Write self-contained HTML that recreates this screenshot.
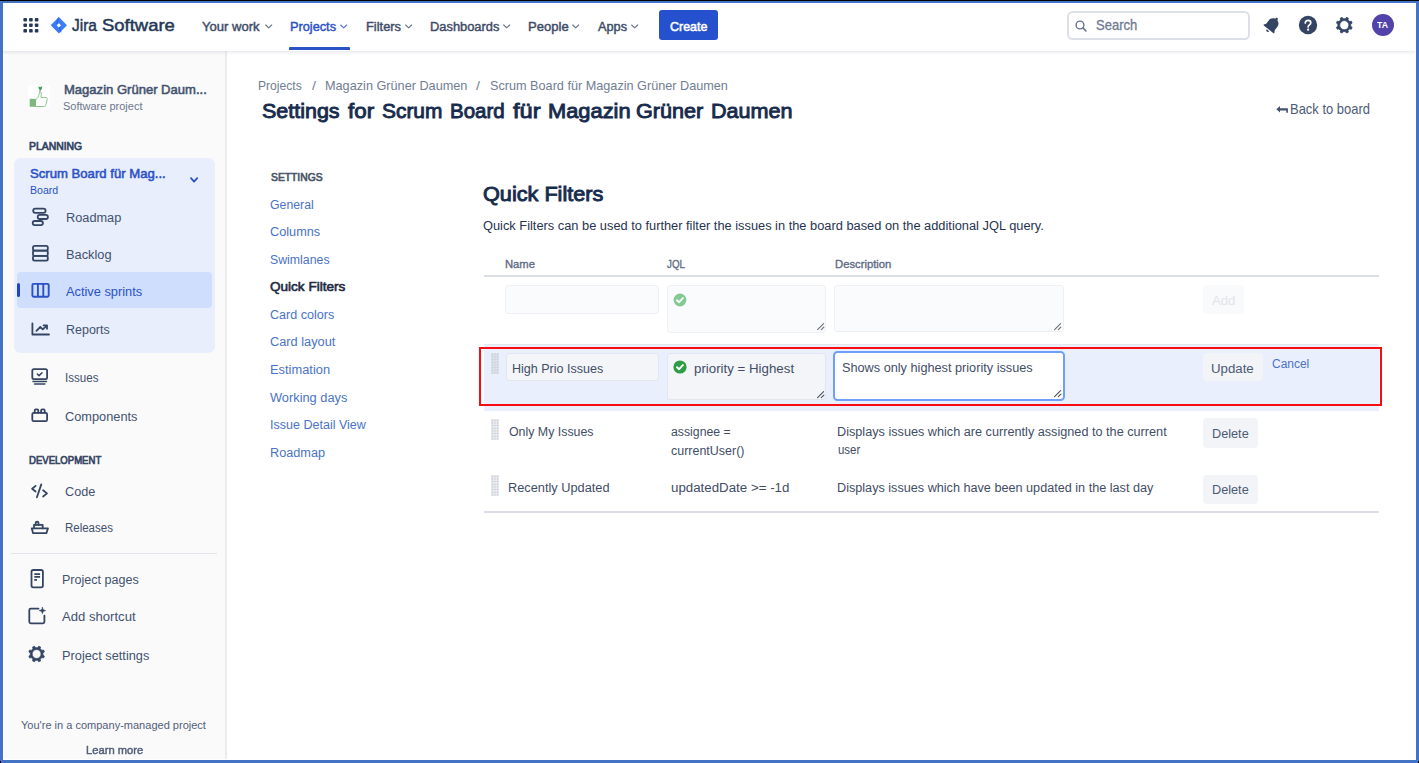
<!DOCTYPE html>
<html><head><meta charset="utf-8"><title>Jira</title>
<style>
html,body{margin:0;padding:0;background:#fff;}
body{width:1419px;height:763px;position:relative;overflow:hidden;font-family:'Liberation Sans', sans-serif;}
svg{position:absolute;overflow:visible}
</style></head><body>
<div style="position:absolute;left:0;top:0;width:1419px;height:763px;filter:blur(0.35px);">
<div style="position:absolute;left:0px;top:0px;width:1419px;height:763px;background:#fff;"></div>
<div style="position:absolute;left:4px;top:51px;width:222px;height:708px;background:#FAFAFB;"></div>
<div style="position:absolute;left:225.2px;top:51px;width:1.7px;height:708px;background:#EBECEF;"></div>
<div style="position:absolute;left:3px;top:3px;width:1413px;height:48px;background:#fff;"></div>
<div style="position:absolute;left:3px;top:50.7px;width:1412px;height:4px;background:linear-gradient(to bottom,rgba(9,30,66,0.085),rgba(9,30,66,0.04) 50%,rgba(9,30,66,0));"></div>
<svg width="1419" height="60" style="left:0;top:0"><rect x="23.4" y="17.9" width="3.6" height="3.5" rx="0.9" fill="#253858"/><rect x="29.1" y="17.9" width="3.6" height="3.5" rx="0.9" fill="#253858"/><rect x="34.8" y="17.9" width="3.6" height="3.5" rx="0.9" fill="#253858"/><rect x="23.4" y="23.5" width="3.6" height="3.5" rx="0.9" fill="#253858"/><rect x="29.1" y="23.5" width="3.6" height="3.5" rx="0.9" fill="#253858"/><rect x="34.8" y="23.5" width="3.6" height="3.5" rx="0.9" fill="#253858"/><rect x="23.4" y="29.1" width="3.6" height="3.5" rx="0.9" fill="#253858"/><rect x="29.1" y="29.1" width="3.6" height="3.5" rx="0.9" fill="#253858"/><rect x="34.8" y="29.1" width="3.6" height="3.5" rx="0.9" fill="#253858"/></svg>
<svg width="1419" height="60" style="left:0;top:0">
<path d="M58.85 17.0 L67.0 25.3 L58.85 33.6 L50.7 25.3 Z M58.85 23.2 L56.75 25.3 L58.85 27.4 L60.95 25.3 Z" fill="#3B7CF8" fill-rule="evenodd"/>
<path d="M58.3 18.2 L57.0 23.4" stroke="#2456BF" stroke-width="1.3" opacity="0.55" stroke-linecap="round"/>
<path d="M59.6 27.5 L60.9 32.0" stroke="#2456BF" stroke-width="1.3" opacity="0.55" stroke-linecap="round"/>
</svg>
<svg width="10" height="8" style="left:264.5px;top:24.1px"><path d="M0.7 1 L3.7 3.9 L6.7 1" fill="none" stroke="#42526E" stroke-width="1.15" stroke-linecap="round" stroke-linejoin="round" opacity="0.8"/></svg>
<svg width="10" height="8" style="left:340px;top:24.1px"><path d="M0.7 1 L3.7 3.9 L6.7 1" fill="none" stroke="#2B51C8" stroke-width="1.15" stroke-linecap="round" stroke-linejoin="round" opacity="0.8"/></svg>
<svg width="10" height="8" style="left:405px;top:24.1px"><path d="M0.7 1 L3.7 3.9 L6.7 1" fill="none" stroke="#42526E" stroke-width="1.15" stroke-linecap="round" stroke-linejoin="round" opacity="0.8"/></svg>
<svg width="10" height="8" style="left:502.8px;top:24.1px"><path d="M0.7 1 L3.7 3.9 L6.7 1" fill="none" stroke="#42526E" stroke-width="1.15" stroke-linecap="round" stroke-linejoin="round" opacity="0.8"/></svg>
<svg width="10" height="8" style="left:571.8px;top:24.1px"><path d="M0.7 1 L3.7 3.9 L6.7 1" fill="none" stroke="#42526E" stroke-width="1.15" stroke-linecap="round" stroke-linejoin="round" opacity="0.8"/></svg>
<svg width="10" height="8" style="left:631.3px;top:24.1px"><path d="M0.7 1 L3.7 3.9 L6.7 1" fill="none" stroke="#42526E" stroke-width="1.15" stroke-linecap="round" stroke-linejoin="round" opacity="0.8"/></svg>
<div style="position:absolute;left:288.8px;top:47.3px;width:61px;height:3px;background:#2B51C8;border-radius:1px 1px 0 0;"></div>
<div style="position:absolute;left:658.7px;top:10.4px;width:59.6px;height:29.7px;background:#2651CE;border-radius:3px;"></div>
<div style="position:absolute;left:1067.1px;top:10.6px;width:183.2px;height:29.3px;box-sizing:border-box;border:2px solid #DEE0E9;border-radius:5.5px;background:#fff;"></div>
<svg width="14" height="14" style="left:1075px;top:19.5px"><circle cx="5" cy="5" r="3.9" fill="none" stroke="#66718B" stroke-width="1.4"/><path d="M7.9 7.9 L11 11" stroke="#66718B" stroke-width="1.5" stroke-linecap="round"/></svg>
<svg width="24" height="24" viewBox="0 0 24 24" style="left:1260.4px;top:13.2px"><g transform="rotate(38 12 12)" fill="#344563">
<path d="M12 3.2c-.7 0-1.2.5-1.2 1.2v.5C8.3 5.5 6.6 7.700 6.600 10.400v4.1l-1.300 2.1c-.2.400.050.900.500.900h12.400c.450 0 .7-.5.500-.9l-1.300-2.100v-4.100c0-2.700-1.700-4.900-4.200-5.500v-.5c0-.7-.5-1.200-1.200-1.200z"/>
<path d="M10.300 18.600h3.400c0 1-.8 1.700-1.700 1.700s-1.700-.7-1.700-1.700z"/></g></svg>
<svg width="20" height="20" style="left:1298px;top:15.2px"><circle cx="10" cy="10" r="9.2" fill="#344563"/>
<path d="M7.3 7.900c0-1.500 1.200-2.600 2.750-2.600s2.750 1 2.750 2.450c0 1.200-.75 1.750-1.500 2.300-.700.500-1.150.9-1.150 1.850" fill="none" stroke="#fff" stroke-width="1.700" stroke-linecap="round"/><circle cx="10.100" cy="14.700" r="1.100" fill="#fff"/></svg>
<svg width="1419" height="60" style="left:0;top:0"><path d="M1350.69 26.41 L1352.13 27.29 L1351.31 29.26 L1349.67 28.86 L1347.96 30.57 L1348.36 32.21 L1346.39 33.03 L1345.51 31.59 L1343.09 31.59 L1342.21 33.03 L1340.24 32.21 L1340.64 30.57 L1338.93 28.86 L1337.29 29.26 L1336.47 27.29 L1337.91 26.41 L1337.91 23.99 L1336.47 23.11 L1337.29 21.14 L1338.93 21.54 L1340.64 19.83 L1340.24 18.19 L1342.21 17.37 L1343.09 18.81 L1345.51 18.81 L1346.39 17.37 L1348.36 18.19 L1347.96 19.83 L1349.67 21.54 L1351.31 21.14 L1352.13 23.11 L1350.69 23.99 Z M1348.90 25.20 A4.6 4.6 0 1 0 1339.70 25.20 A4.6 4.6 0 1 0 1348.90 25.20 Z" fill="#344563" fill-rule="evenodd" stroke="#344563" stroke-width="0.8" stroke-linejoin="round"/></svg>
<div style="position:absolute;left:1371.9px;top:14.1px;width:22.2px;height:22.2px;background:#5243AA;border-radius:50%;"></div>
<div style="position:absolute;left:27.9px;top:84.6px;width:21.7px;height:23.4px;background:#fff;border-radius:3px;"></div>
<svg width="22" height="24" viewBox="0 0 22 24" style="left:28px;top:84.6px">
<path d="M10.3 1.2 L12.2 2.3 L14.3 1.1 L13.7 4.2 L12.3 5.4 L11.0 4.3 Z" fill="#3FA04E"/>
<path d="M12.2 5.2 L11.7 7.2" stroke="#8C6C90" stroke-width="0.9"/>
<rect x="1.7" y="13.8" width="6.3" height="8.0" fill="#7DB97C"/>
<path d="M8.1 14.3 C9.4 13.6 10.3 12.3 10.7 10.6 L11.4 7.6 C11.6 6.7 13.2 6.8 13.3 7.9 L13.0 12.6 L18.3 12.6 C19.4 12.6 19.6 13.6 19.2 14.6 L17.6 20.6 C17.4 21.3 17.0 21.5 16.3 21.5 L8.1 21.5" fill="#fff" stroke="#8CC48B" stroke-width="1.0" stroke-linejoin="round"/>
</svg>
<div style="position:absolute;left:13.6px;top:157.5px;width:201.5px;height:195.1px;background:#E8EEFC;border-radius:7px;"></div>
<svg width="10" height="8" style="left:189.6px;top:176.6px"><path d="M1 1.200 L4.100 4.600 L7.200 1.200" fill="none" stroke="#2B51C8" stroke-width="1.800" stroke-linecap="round" stroke-linejoin="round"/></svg>
<div style="position:absolute;left:16.8px;top:271.7px;width:195.5px;height:36.8px;background:#CEDEFC;border-radius:4px;"></div>
<div style="position:absolute;left:17.2px;top:283.3px;width:3.1px;height:14.1px;background:#1F45C6;border-radius:1.5px;"></div>
<svg width="240" height="763" style="left:0;top:0" fill="none" stroke="#344563" stroke-width="1.800" stroke-linecap="round" stroke-linejoin="round"><rect x="33.200" y="208.600" width="12.400" height="4.200" rx="2.100"/>
<rect x="37.700" y="214.800" width="10.200" height="4.200" rx="2.100"/>
<rect x="32.700" y="221.000" width="10.200" height="4.200" rx="2.100"/></svg>
<svg width="240" height="763" style="left:0;top:0" fill="none" stroke="#344563" stroke-width="1.800" stroke-linecap="round" stroke-linejoin="round"><rect x="33.000" y="245.800" width="14.800" height="4.800" rx="1.600"/>
<rect x="33.000" y="250.600" width="14.800" height="5.200" rx="1.200"/>
<rect x="33.000" y="255.800" width="14.800" height="4.900" rx="1.600"/></svg>
<svg width="240" height="763" style="left:0;top:0" fill="none" stroke="#2B51C8" stroke-width="1.900" stroke-linejoin="round">
<rect x="32.400" y="283.900" width="16.300" height="12.800" rx="1.200"/><path d="M37.900 283.900 V296.700 M43.300 283.900 V296.700"/></svg>
<svg width="240" height="763" style="left:0;top:0" fill="none" stroke="#344563" stroke-width="1.800" stroke-linecap="round" stroke-linejoin="round"><path d="M32.400 323.300 V334.500 H49.000"/><path d="M36.400 330.800 L40.300 327.000 L42.800 329.300 L46.500 325.900"/><path d="M43.600 325.400 H47.000 V328.800"/></svg>
<svg width="240" height="763" style="left:0;top:0" fill="none" stroke="#344563" stroke-width="1.800" stroke-linecap="round" stroke-linejoin="round"><rect x="32.300" y="369.200" width="14.800" height="10.000" rx="1.600"/><path d="M37.400 374.100 L39.100 375.600 L42.000 372.800" stroke-width="1.500"/>
<path d="M33.000 381.500 H46.400 M34.600 384.000 H44.800" stroke-width="1.600"/></svg>
<svg width="240" height="763" style="left:0;top:0" fill="none" stroke="#344563" stroke-width="1.800" stroke-linecap="round" stroke-linejoin="round"><rect x="32.300" y="412.800" width="14.800" height="8.400" rx="1.400"/><path d="M34.700 412.800 V410.400 Q34.700 409.300 35.800 409.300 H37.200 Q38.300 409.300 38.300 410.400 V412.800 M41.100 412.800 V410.400 Q41.100 409.300 42.200 409.300 H43.600 Q44.700 409.300 44.700 410.400 V412.800"/></svg>
<svg width="240" height="763" style="left:0;top:0" fill="none" stroke="#344563" stroke-width="1.800" stroke-linecap="round" stroke-linejoin="round"><path d="M35.6 485.9 L32.1 488.7 L35.6 491.5"/><path d="M43.1 490.3 L47.0 493.4 L43.1 496.5"/><path d="M41.3 484.4 L36.9 497.3"/></svg>
<svg width="240" height="763" style="left:0;top:0" fill="none" stroke="#344563" stroke-width="1.800" stroke-linecap="round" stroke-linejoin="round"><path d="M31.7 528.3 H48.0 L46.4 533.2 H33.1 Z"/><path d="M34.0 528.3 V524.9 H42.7 V528.3"/><path d="M35.7 524.9 V523.0 Q35.7 521.7 37.1 521.7 Q38.5 521.7 38.5 523.0 V524.9"/></svg>
<div style="position:absolute;left:10.8px;top:552.9px;width:206.1px;height:1.6px;background:#E1E4E9;"></div>
<svg width="240" height="763" style="left:0;top:0" fill="none" stroke="#344563" stroke-width="1.800" stroke-linecap="round" stroke-linejoin="round"><rect x="31.500" y="570.000" width="11.400" height="17.300" rx="1.800"/><path d="M34.300 574.100 H40.100 M34.300 576.900 H40.100 M34.300 579.800 H37.000" stroke-width="1.700" stroke-linecap="butt"/></svg>
<svg width="240" height="763" style="left:0;top:0" fill="none" stroke="#344563" stroke-width="1.800" stroke-linecap="round" stroke-linejoin="round"><path d="M38.500 608.700 H30.800 Q29.300 608.700 29.300 610.200 V621.800 Q29.300 623.300 30.800 623.300 H42.900 Q44.400 623.300 44.400 621.800 V615.600"/>
<path d="M42.4 607.4 L43.2 609.8 L45.6 610.600 L43.2 611.4 L42.4 613.8 L41.6 611.4 L39.2 610.6 L41.6 609.8 Z" fill="#344563" stroke-width="0.6"/></svg>
<svg width="240" height="763" style="left:0;top:0"><path d="M42.89 655.19 L44.33 656.06 L43.52 658.01 L41.89 657.61 L40.21 659.29 L40.61 660.92 L38.66 661.73 L37.79 660.29 L35.41 660.29 L34.54 661.73 L32.59 660.92 L32.99 659.29 L31.31 657.61 L29.68 658.01 L28.87 656.06 L30.31 655.19 L30.31 652.81 L28.87 651.94 L29.68 649.99 L31.31 650.39 L32.99 648.71 L32.59 647.08 L34.54 646.27 L35.41 647.71 L37.79 647.71 L38.66 646.27 L40.61 647.08 L40.21 648.71 L41.89 650.39 L43.52 649.99 L44.33 651.94 L42.89 652.81 Z M41.10 654.00 A4.5 4.5 0 1 0 32.10 654.00 A4.5 4.5 0 1 0 41.10 654.00 Z" fill="#344563" fill-rule="evenodd" stroke="#344563" stroke-width="0.8" stroke-linejoin="round"/></svg>
<svg width="14" height="10" style="left:1275.8px;top:105px"><path d="M0.300 4.300 L4.000 1.000 V3.200 H11.900 V7.800 H10.300 V5.400 H4.000 V7.600 Z" fill="#42526E"/></svg>
<div style="position:absolute;left:484.3px;top:275.2px;width:894.8px;height:2px;background:#DBDEE6;"></div>
<div style="position:absolute;left:505.4px;top:285px;width:154px;height:28.9px;background:#FAFBFC;border:1px solid #EEF0F3;border-radius:3px;box-sizing:border-box;"></div>
<div style="position:absolute;left:667px;top:285px;width:159.3px;height:47.8px;background:#FAFBFC;border:1px solid #EEF0F3;border-radius:3px;box-sizing:border-box;"></div>
<div style="position:absolute;left:833.5px;top:285px;width:230.7px;height:47.4px;background:#FAFBFC;border:1px solid #EEF0F3;border-radius:3px;box-sizing:border-box;"></div>
<svg width="16" height="16" style="left:672px;top:291.5px"><circle cx="8" cy="8" r="6.4" fill="#84C994"/><path d="M5.0 8.2 L7.1 10.2 L10.9 6.1" fill="none" stroke="#fff" stroke-width="1.9" stroke-linecap="round" stroke-linejoin="round"/></svg>
<svg width="9" height="8" style="left:816.7px;top:323px"><path d="M0.6 6.6 L6.6 0.6 M4.3 6.7 L6.9 4.1" stroke="#6A6F78" stroke-width="1.1" stroke-linecap="round"/></svg>
<svg width="9" height="8" style="left:1053.8px;top:322.6px"><path d="M0.6 6.6 L6.6 0.6 M4.3 6.7 L6.9 4.1" stroke="#6A6F78" stroke-width="1.1" stroke-linecap="round"/></svg>
<div style="position:absolute;left:1203.2px;top:284.7px;width:40.7px;height:28.9px;background:#F9FAFB;border-radius:3px;"></div>
<div style="position:absolute;left:484.3px;top:343.5px;width:894.8px;height:1.1px;background:#E3E6EB;"></div>
<div style="position:absolute;left:483.6px;top:344.6px;width:895.5px;height:66.6px;background:#E9EFFC;"></div>
<div style="position:absolute;left:479.1px;top:346.8px;width:902.8px;height:59px;box-sizing:border-box;border:2px solid #F80C12;"></div>
<div style="position:absolute;left:490.6px;top:352.8px;width:8px;height:21.3px;background:radial-gradient(circle at 50% 50%,#CBCFD8 0.75px,rgba(195,200,210,0.3) 1.2px,transparent 1.5px) 0 0/2.667px 2.667px;"></div>
<div style="position:absolute;left:505.7px;top:352.9px;width:153.5px;height:28.6px;background:#F3F5F9;border:1px solid #E3E6EC;border-radius:3px;box-sizing:border-box;"></div>
<div style="position:absolute;left:667.3px;top:352.9px;width:158.7px;height:46.9px;background:#F3F5F9;border:1px solid #E3E6EC;border-radius:3px;box-sizing:border-box;"></div>
<svg width="16" height="16" style="left:671.9px;top:359.4px"><circle cx="8" cy="8" r="6.6" fill="#2F9C48"/><path d="M5.0 8.2 L7.1 10.2 L10.9 6.1" fill="none" stroke="#fff" stroke-width="1.9" stroke-linecap="round" stroke-linejoin="round"/></svg>
<svg width="9" height="8" style="left:816.5px;top:390.6px"><path d="M0.6 6.6 L6.6 0.6 M4.3 6.7 L6.9 4.1" stroke="#4A4F58" stroke-width="1.1" stroke-linecap="round"/></svg>
<div style="position:absolute;left:832.8px;top:351.2px;width:232.2px;height:49.5px;background:#fff;border:2px solid #6F9FFA;border-radius:4.5px;box-sizing:border-box;"></div>
<svg width="9" height="8" style="left:1053.8px;top:389.6px"><path d="M0.6 6.6 L6.6 0.6 M4.3 6.7 L6.9 4.1" stroke="#4A4F58" stroke-width="1.1" stroke-linecap="round"/></svg>
<div style="position:absolute;left:1203.2px;top:352.9px;width:59.8px;height:28.5px;background:#F2F4F7;border-radius:4px;"></div>
<div style="position:absolute;left:490.7px;top:418.7px;width:8px;height:21.3px;background:radial-gradient(circle at 50% 50%,#CBCFD8 0.75px,rgba(195,200,210,0.3) 1.2px,transparent 1.5px) 0 0/2.667px 2.667px;"></div>
<div style="position:absolute;left:1202.7px;top:418.4px;width:55.1px;height:29.5px;background:#F3F4F7;border-radius:4px;"></div>
<div style="position:absolute;left:490.7px;top:474.6px;width:8px;height:21.3px;background:radial-gradient(circle at 50% 50%,#CBCFD8 0.75px,rgba(195,200,210,0.3) 1.2px,transparent 1.5px) 0 0/2.667px 2.667px;"></div>
<div style="position:absolute;left:1202.7px;top:474.5px;width:55.1px;height:29.5px;background:#F3F4F7;border-radius:4px;"></div>
<div style="position:absolute;left:484.3px;top:511.1px;width:894.8px;height:2px;background:#DBDEE6;"></div>
<div style="position:absolute;left:72.20px;top:11px;white-space:pre;line-height:30px;font-size:17px;font-weight:400;color:#253858;transform:scaleX(0.9092);transform-origin:0 0;-webkit-text-stroke:0.5px #253858;">Jira</div>
<div style="position:absolute;left:102.20px;top:11px;white-space:pre;line-height:30px;font-size:17px;font-weight:400;color:#253858;transform:scaleX(1.0851);transform-origin:0 0;-webkit-text-stroke:0.5px #253858;">Software</div>
<div style="position:absolute;left:202.00px;top:12px;white-space:pre;line-height:30px;font-size:13.25px;font-weight:400;color:#3E4C67;transform:scaleX(0.9863);transform-origin:0 0;-webkit-text-stroke:0.45px #3E4C67;">Your work</div>
<div style="position:absolute;left:289.64px;top:12px;white-space:pre;line-height:30px;font-size:13.25px;font-weight:400;color:#2B51C8;transform:scaleX(0.9611);transform-origin:0 0;-webkit-text-stroke:0.45px #2B51C8;">Projects</div>
<div style="position:absolute;left:365.53px;top:12px;white-space:pre;line-height:30px;font-size:13.25px;font-weight:400;color:#3E4C67;transform:scaleX(0.9706);transform-origin:0 0;-webkit-text-stroke:0.45px #3E4C67;">Filters</div>
<div style="position:absolute;left:429.53px;top:12px;white-space:pre;line-height:30px;font-size:13.25px;font-weight:400;color:#3E4C67;transform:scaleX(0.9715);transform-origin:0 0;-webkit-text-stroke:0.45px #3E4C67;">Dashboards</div>
<div style="position:absolute;left:528.21px;top:12px;white-space:pre;line-height:30px;font-size:13.25px;font-weight:400;color:#3E4C67;transform:scaleX(0.9852);transform-origin:0 0;-webkit-text-stroke:0.45px #3E4C67;">People</div>
<div style="position:absolute;left:598.20px;top:12px;white-space:pre;line-height:30px;font-size:13.25px;font-weight:400;color:#3E4C67;transform:scaleX(0.9615);transform-origin:0 0;-webkit-text-stroke:0.45px #3E4C67;">Apps</div>
<div style="position:absolute;left:670.20px;top:12px;white-space:pre;line-height:30px;font-size:13.25px;font-weight:400;color:#fff;transform:scaleX(0.9416);transform-origin:0 0;-webkit-text-stroke:0.55px #fff;">Create</div>
<div style="position:absolute;left:1096.00px;top:11px;white-space:pre;line-height:30px;font-size:13.75px;font-weight:400;color:#6F7A92;transform:scaleX(0.9483);transform-origin:0 0;-webkit-text-stroke:0.3px #6F7A92;">Search</div>
<div style="position:absolute;left:1377.20px;top:10px;white-space:pre;line-height:30px;font-size:8.75px;font-weight:700;color:#fff;transform:scaleX(1.0004);transform-origin:0 0;">TA</div>
<div style="position:absolute;left:63.52px;top:75px;white-space:pre;line-height:30px;font-size:13.25px;font-weight:400;color:#42526E;transform:scaleX(0.9840);transform-origin:0 0;-webkit-text-stroke:0.55px #42526E;">Magazin Grüner Daum...</div>
<div style="position:absolute;left:63.40px;top:91px;white-space:pre;line-height:30px;font-size:11.25px;font-weight:400;color:#6B778C;transform:scaleX(0.9773);transform-origin:0 0;">Software project</div>
<div style="position:absolute;left:29.00px;top:131px;white-space:pre;line-height:30px;font-size:10.75px;font-weight:400;color:#344563;transform:scaleX(0.9671);transform-origin:0 0;-webkit-text-stroke:0.7px #344563;">PLANNING</div>
<div style="position:absolute;left:30.00px;top:159px;white-space:pre;line-height:30px;font-size:13.25px;font-weight:400;color:#2B51C8;transform:scaleX(0.9906);transform-origin:0 0;-webkit-text-stroke:0.55px #2B51C8;">Scrum Board für Mag...</div>
<div style="position:absolute;left:30.00px;top:175px;white-space:pre;line-height:30px;font-size:11.25px;font-weight:400;color:#2B51C8;transform:scaleX(0.9408);transform-origin:0 0;">Board</div>
<div style="position:absolute;left:65.65px;top:203px;white-space:pre;line-height:30px;font-size:13.25px;font-weight:400;color:#42526E;transform:scaleX(0.9626);transform-origin:0 0;">Roadmap</div>
<div style="position:absolute;left:65.65px;top:240px;white-space:pre;line-height:30px;font-size:13.25px;font-weight:400;color:#42526E;transform:scaleX(0.9654);transform-origin:0 0;">Backlog</div>
<div style="position:absolute;left:65.65px;top:277px;white-space:pre;line-height:30px;font-size:13.25px;font-weight:400;color:#2B51C8;transform:scaleX(0.9670);transform-origin:0 0;">Active sprints</div>
<div style="position:absolute;left:65.65px;top:315px;white-space:pre;line-height:30px;font-size:13.25px;font-weight:400;color:#42526E;transform:scaleX(0.9419);transform-origin:0 0;">Reports</div>
<div style="position:absolute;left:65.20px;top:363px;white-space:pre;line-height:30px;font-size:13.25px;font-weight:400;color:#42526E;transform:scaleX(0.8741);transform-origin:0 0;">Issues</div>
<div style="position:absolute;left:65.20px;top:402px;white-space:pre;line-height:30px;font-size:13.25px;font-weight:400;color:#42526E;transform:scaleX(0.9642);transform-origin:0 0;">Components</div>
<div style="position:absolute;left:28.80px;top:445px;white-space:pre;line-height:30px;font-size:10.75px;font-weight:400;color:#344563;transform:scaleX(0.8889);transform-origin:0 0;-webkit-text-stroke:0.7px #344563;">DEVELOPMENT</div>
<div style="position:absolute;left:65.20px;top:477px;white-space:pre;line-height:30px;font-size:13.25px;font-weight:400;color:#42526E;transform:scaleX(0.9551);transform-origin:0 0;">Code</div>
<div style="position:absolute;left:65.20px;top:513px;white-space:pre;line-height:30px;font-size:13.25px;font-weight:400;color:#42526E;transform:scaleX(0.8667);transform-origin:0 0;">Releases</div>
<div style="position:absolute;left:62.30px;top:565px;white-space:pre;line-height:30px;font-size:13.25px;font-weight:400;color:#42526E;transform:scaleX(0.9472);transform-origin:0 0;">Project pages</div>
<div style="position:absolute;left:62.30px;top:602px;white-space:pre;line-height:30px;font-size:13.25px;font-weight:400;color:#42526E;transform:scaleX(0.9892);transform-origin:0 0;">Add shortcut</div>
<div style="position:absolute;left:62.30px;top:641px;white-space:pre;line-height:30px;font-size:13.25px;font-weight:400;color:#42526E;transform:scaleX(0.9642);transform-origin:0 0;">Project settings</div>
<div style="position:absolute;left:21.00px;top:710px;white-space:pre;line-height:30px;font-size:11.5px;font-weight:400;color:#525E79;transform:scaleX(0.9586);transform-origin:0 0;">You&#x27;re in a company-managed project</div>
<div style="position:absolute;left:85.60px;top:735px;white-space:pre;line-height:30px;font-size:11.5px;font-weight:400;color:#525E79;transform:scaleX(0.9724);transform-origin:0 0;-webkit-text-stroke:0.45px #525E79;">Learn more</div>
<div style="position:absolute;left:257.57px;top:71px;white-space:pre;line-height:30px;font-size:13px;font-weight:400;color:#717D93;transform:scaleX(0.9320);transform-origin:0 0;">Projects</div>
<div style="position:absolute;left:311.60px;top:71px;white-space:pre;line-height:30px;font-size:13px;font-weight:400;color:#717D93;transform:scaleX(1.1000);transform-origin:0 0;">/</div>
<div style="position:absolute;left:324.52px;top:71px;white-space:pre;line-height:30px;font-size:13px;font-weight:400;color:#717D93;transform:scaleX(0.9756);transform-origin:0 0;">Magazin Grüner Daumen</div>
<div style="position:absolute;left:476.40px;top:71px;white-space:pre;line-height:30px;font-size:13px;font-weight:400;color:#717D93;transform:scaleX(1.1000);transform-origin:0 0;">/</div>
<div style="position:absolute;left:490.00px;top:71px;white-space:pre;line-height:30px;font-size:13px;font-weight:400;color:#717D93;transform:scaleX(0.9742);transform-origin:0 0;">Scrum Board für Magazin Grüner Daumen</div>
<div style="position:absolute;left:262.30px;top:96px;white-space:pre;line-height:30px;font-size:21px;font-weight:400;color:#172B4D;transform:scaleX(1.0228);transform-origin:0 0;-webkit-text-stroke:0.9px #172B4D;">Settings</div>
<div style="position:absolute;left:347.60px;top:96px;white-space:pre;line-height:30px;font-size:21px;font-weight:400;color:#172B4D;transform:scaleX(1.0647);transform-origin:0 0;-webkit-text-stroke:0.9px #172B4D;">for</div>
<div style="position:absolute;left:382.10px;top:96px;white-space:pre;line-height:30px;font-size:21px;font-weight:400;color:#172B4D;transform:scaleX(0.9954);transform-origin:0 0;-webkit-text-stroke:0.9px #172B4D;">Scrum</div>
<div style="position:absolute;left:450.02px;top:96px;white-space:pre;line-height:30px;font-size:21px;font-weight:400;color:#172B4D;transform:scaleX(0.9768);transform-origin:0 0;-webkit-text-stroke:0.9px #172B4D;">Board</div>
<div style="position:absolute;left:513.30px;top:96px;white-space:pre;line-height:30px;font-size:21px;font-weight:400;color:#172B4D;transform:scaleX(1.1218);transform-origin:0 0;-webkit-text-stroke:0.9px #172B4D;">für</div>
<div style="position:absolute;left:548.16px;top:96px;white-space:pre;line-height:30px;font-size:21px;font-weight:400;color:#172B4D;transform:scaleX(1.0399);transform-origin:0 0;-webkit-text-stroke:0.9px #172B4D;">Magazin</div>
<div style="position:absolute;left:635.87px;top:96px;white-space:pre;line-height:30px;font-size:21px;font-weight:400;color:#172B4D;transform:scaleX(1.0301);transform-origin:0 0;-webkit-text-stroke:0.9px #172B4D;">Grüner</div>
<div style="position:absolute;left:711.27px;top:96px;white-space:pre;line-height:30px;font-size:21px;font-weight:400;color:#172B4D;transform:scaleX(1.0284);transform-origin:0 0;-webkit-text-stroke:0.9px #172B4D;">Daumen</div>
<div style="position:absolute;left:1290.26px;top:95px;white-space:pre;line-height:30px;font-size:13.75px;font-weight:400;color:#4E5B76;transform:scaleX(0.9436);transform-origin:0 0;">Back to board</div>
<div style="position:absolute;left:270.90px;top:162px;white-space:pre;line-height:30px;font-size:10.75px;font-weight:400;color:#4A5468;transform:scaleX(0.9592);transform-origin:0 0;-webkit-text-stroke:0.65px #4A5468;">SETTINGS</div>
<div style="position:absolute;left:270.30px;top:190px;white-space:pre;line-height:30px;font-size:13.25px;font-weight:400;color:#4A73C5;transform:scaleX(0.9281);transform-origin:0 0;">General</div>
<div style="position:absolute;left:270.30px;top:217px;white-space:pre;line-height:30px;font-size:13.25px;font-weight:400;color:#4A73C5;transform:scaleX(0.9590);transform-origin:0 0;">Columns</div>
<div style="position:absolute;left:270.30px;top:245px;white-space:pre;line-height:30px;font-size:13.25px;font-weight:400;color:#4A73C5;transform:scaleX(0.9296);transform-origin:0 0;">Swimlanes</div>
<div style="position:absolute;left:270.30px;top:272px;white-space:pre;line-height:30px;font-size:13.25px;font-weight:400;color:#20293F;transform:scaleX(1.0231);transform-origin:0 0;-webkit-text-stroke:0.6px #20293F;">Quick Filters</div>
<div style="position:absolute;left:270.30px;top:300px;white-space:pre;line-height:30px;font-size:13.25px;font-weight:400;color:#4A73C5;transform:scaleX(0.9483);transform-origin:0 0;">Card colors</div>
<div style="position:absolute;left:270.30px;top:327px;white-space:pre;line-height:30px;font-size:13.25px;font-weight:400;color:#4A73C5;transform:scaleX(0.9651);transform-origin:0 0;">Card layout</div>
<div style="position:absolute;left:270.30px;top:355px;white-space:pre;line-height:30px;font-size:13.25px;font-weight:400;color:#4A73C5;transform:scaleX(0.9709);transform-origin:0 0;">Estimation</div>
<div style="position:absolute;left:270.30px;top:383px;white-space:pre;line-height:30px;font-size:13.25px;font-weight:400;color:#4A73C5;transform:scaleX(0.9664);transform-origin:0 0;">Working days</div>
<div style="position:absolute;left:270.30px;top:410px;white-space:pre;line-height:30px;font-size:13.25px;font-weight:400;color:#4A73C5;transform:scaleX(0.9458);transform-origin:0 0;">Issue Detail View</div>
<div style="position:absolute;left:270.30px;top:438px;white-space:pre;line-height:30px;font-size:13.25px;font-weight:400;color:#4A73C5;transform:scaleX(0.9583);transform-origin:0 0;">Roadmap</div>
<div style="position:absolute;left:482.90px;top:179px;white-space:pre;line-height:30px;font-size:20.5px;font-weight:400;color:#172B4D;transform:scaleX(1.0567);transform-origin:0 0;-webkit-text-stroke:0.9px #172B4D;">Quick Filters</div>
<div style="position:absolute;left:482.70px;top:211px;white-space:pre;line-height:30px;font-size:13.25px;font-weight:400;color:#26344F;transform:scaleX(0.9675);transform-origin:0 0;">Quick Filters can be used to further filter the issues in the board based on the additional JQL query.</div>
<div style="position:absolute;left:505.40px;top:249px;white-space:pre;line-height:30px;font-size:11.25px;font-weight:400;color:#5E6C84;transform:scaleX(0.9982);transform-origin:0 0;-webkit-text-stroke:0.35px #5E6C84;">Name</div>
<div style="position:absolute;left:667.00px;top:249px;white-space:pre;line-height:30px;font-size:11.25px;font-weight:400;color:#5E6C84;transform:scaleX(0.8687);transform-origin:0 0;-webkit-text-stroke:0.35px #5E6C84;">JQL</div>
<div style="position:absolute;left:834.80px;top:249px;white-space:pre;line-height:30px;font-size:11.25px;font-weight:400;color:#5E6C84;transform:scaleX(1.0015);transform-origin:0 0;-webkit-text-stroke:0.35px #5E6C84;">Description</div>
<div style="position:absolute;left:1212.00px;top:286px;white-space:pre;line-height:30px;font-size:13.25px;font-weight:400;color:#E1E4E9;transform:scaleX(0.9911);transform-origin:0 0;">Add</div>
<div style="position:absolute;left:511.85px;top:354px;white-space:pre;line-height:30px;font-size:13.25px;font-weight:400;color:#414D66;transform:scaleX(0.9453);transform-origin:0 0;">High Prio Issues</div>
<div style="position:absolute;left:693.70px;top:354px;white-space:pre;line-height:30px;font-size:13.25px;font-weight:400;color:#414D66;transform:scaleX(1.0030);transform-origin:0 0;">priority = Highest</div>
<div style="position:absolute;left:841.70px;top:353px;white-space:pre;line-height:30px;font-size:13.25px;font-weight:400;color:#414D66;transform:scaleX(0.9588);transform-origin:0 0;">Shows only highest priority issues</div>
<div style="position:absolute;left:1211.00px;top:354px;white-space:pre;line-height:30px;font-size:13.25px;font-weight:400;color:#4C5975;transform:scaleX(0.9986);transform-origin:0 0;">Update</div>
<div style="position:absolute;left:1272.00px;top:349px;white-space:pre;line-height:30px;font-size:13.25px;font-weight:400;color:#4A73C5;transform:scaleX(0.9031);transform-origin:0 0;">Cancel</div>
<div style="position:absolute;left:509.00px;top:417px;white-space:pre;line-height:30px;font-size:13.25px;font-weight:400;color:#414D66;transform:scaleX(0.9336);transform-origin:0 0;">Only My Issues</div>
<div style="position:absolute;left:671.30px;top:417px;white-space:pre;line-height:30px;font-size:13.25px;font-weight:400;color:#414D66;transform:scaleX(0.9255);transform-origin:0 0;">assignee =</div>
<div style="position:absolute;left:671.30px;top:436px;white-space:pre;line-height:30px;font-size:13.25px;font-weight:400;color:#414D66;transform:scaleX(0.9417);transform-origin:0 0;">currentUser()</div>
<div style="position:absolute;left:837.34px;top:417px;white-space:pre;line-height:30px;font-size:13.25px;font-weight:400;color:#414D66;transform:scaleX(0.9565);transform-origin:0 0;">Displays issues which are currently assigned to the current</div>
<div style="position:absolute;left:838.30px;top:435px;white-space:pre;line-height:30px;font-size:13.25px;font-weight:400;color:#414D66;transform:scaleX(0.8611);transform-origin:0 0;">user</div>
<div style="position:absolute;left:1212.24px;top:419px;white-space:pre;line-height:30px;font-size:13.25px;font-weight:400;color:#4C5975;transform:scaleX(0.9585);transform-origin:0 0;">Delete</div>
<div style="position:absolute;left:508.04px;top:473px;white-space:pre;line-height:30px;font-size:13.25px;font-weight:400;color:#414D66;transform:scaleX(0.9638);transform-origin:0 0;">Recently Updated</div>
<div style="position:absolute;left:671.30px;top:473px;white-space:pre;line-height:30px;font-size:13.25px;font-weight:400;color:#414D66;transform:scaleX(1.0042);transform-origin:0 0;">updatedDate &gt;= -1d</div>
<div style="position:absolute;left:837.35px;top:473px;white-space:pre;line-height:30px;font-size:13.25px;font-weight:400;color:#414D66;transform:scaleX(0.9543);transform-origin:0 0;">Displays issues which have been updated in the last day</div>
<div style="position:absolute;left:1212.24px;top:475px;white-space:pre;line-height:30px;font-size:13.25px;font-weight:400;color:#4C5975;transform:scaleX(0.9585);transform-origin:0 0;">Delete</div>
</div>
<div style="position:absolute;left:0;top:0;width:1419px;height:3px;background:#4472C4"></div>
<div style="position:absolute;left:0;top:0;width:3px;height:763px;background:#4472C4"></div>
<div style="position:absolute;left:1416px;top:0;width:3px;height:763px;background:#4472C4"></div>
<div style="position:absolute;left:0;top:760px;width:1419px;height:3px;background:#4472C4"></div>
<div style="position:absolute;left:0;top:0;width:1419px;height:1px;background:#000"></div>
<div style="position:absolute;left:0;top:761px;width:1px;height:2px;background:#000"></div>
<div style="position:absolute;left:1418px;top:761px;width:1px;height:2px;background:#000"></div>
</body></html>
